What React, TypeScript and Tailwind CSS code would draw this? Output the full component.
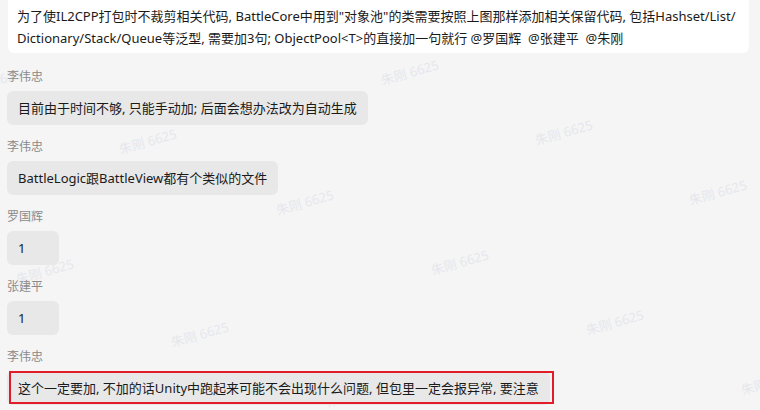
import React from 'react';

const FONT = '"Segoe UI", "Noto Sans", "Noto Sans CJK SC", sans-serif';

const messages: { name: string; text: string; marked?: boolean }[] = [
  { name: '李伟忠', text: '目前由于时间不够, 只能手动加; 后面会想办法改为自动生成' },
  { name: '李伟忠', text: 'BattleLogic跟BattleView都有个类似的文件' },
  { name: '罗国辉', text: '1' },
  { name: '张建平', text: '1' },
  {
    name: '李伟忠',
    text: '这个一定要加, 不加的话Unity中跑起来可能不会出现什么问题, 但包里一定会报异常, 要注意',
    marked: true,
  },
];

// watermark centres, repeating lattice
const watermarks: [number, number][] = [
  [-7, 82],
  [148, 142],
  [305, 203],
  [460, 263],
  [615, 323],
  [770, 383],
  [410, 73],
  [564, 133],
  [718, 193],
  [45, 272],
  [200, 335],
  [355, 395],
];

function Watermarks() {
  return (
    <div className="pointer-events-none absolute inset-0 overflow-hidden">
      {watermarks.map(([x, y], i) => (
        <span
          key={i}
          className="absolute -translate-x-1/2 -translate-y-1/2 -rotate-[16deg] whitespace-nowrap text-[13px] text-[#e6e7ed]"
          style={{ left: x, top: y }}
        >
          朱刚 6625
        </span>
      ))}
    </div>
  );
}

export default function App() {
  return (
    <div
      className="relative h-[410px] w-[760px] overflow-hidden bg-[#f5f5f5] text-[#1a1a1a]"
      style={{ fontFamily: FONT }}
    >
      <Watermarks />

      <div className="relative px-[7px]">
        {/* quoted message card */}
        <div className="-mt-2 ml-px mr-[4px] rounded-md bg-white pl-[9px] pr-[6px] pt-[13px] pb-[4px] text-[13px] leading-[22px]">
          为了使IL2CPP打包时不裁剪相关代码, BattleCore中用到"对象池"的类需要按照上图那样添加相关保留代码, 包括Hashset/List/
          <br />
          Dictionary/Stack/Queue等泛型, 需要加3句; ObjectPool&lt;T&gt;的直接加一句就行 @罗国辉&nbsp; @张建平&nbsp; @朱刚
        </div>

        <div className="mt-4 flex flex-col gap-[14px]">
          {messages.map((m, i) => (
            <div key={i} className="flex flex-col items-start">
              <div className="text-[12px] leading-4 text-[#8a8a8a]">{m.name}</div>
              <div className="relative mt-1.5 rounded-md bg-[#e8e8e8] px-[11px] py-[7px] text-[13px] leading-5">
                {m.text.length === 1 ? <span className="inline-block w-[30px]">{m.text}</span> : m.text}
                {m.marked && (
                  <div className="absolute left-[2px] -right-[4px] top-0 bottom-px border-2 border-[#e21d2a]" />
                )}
              </div>
            </div>
          ))}
        </div>
      </div>
    </div>
  );
}
